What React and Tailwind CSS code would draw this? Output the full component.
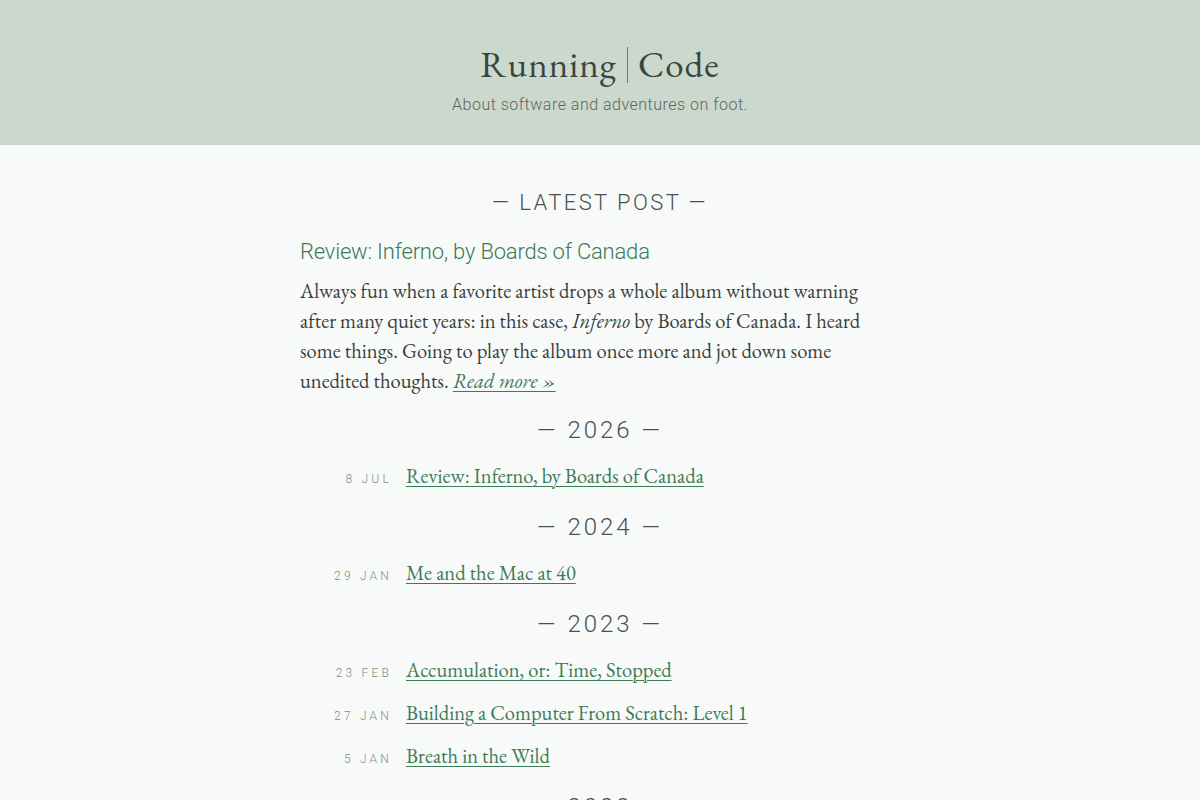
const serif = "font-['EB_Garamond','Liberation_Serif',serif]"
const sans = "font-['Roboto','Liberation_Sans',sans-serif]"

const years = [
  {
    year: '2026',
    posts: [{ date: '8 JUL', title: 'Review: Inferno, by Boards of Canada' }],
  },
  {
    year: '2024',
    posts: [{ date: '29 JAN', title: 'Me and the Mac at 40' }],
  },
  {
    year: '2023',
    posts: [
      { date: '23 FEB', title: 'Accumulation, or: Time, Stopped' },
      { date: '27 JAN', title: 'Building a Computer From Scratch: Level 1' },
      { date: '5 JAN', title: 'Breath in the Wild' },
    ],
  },
  {
    year: '2022',
    posts: [{ date: '14 NOV', title: 'Notes on a Long Run' }],
  },
]

function Heading({ children }) {
  return (
    <h2 className={`${sans} text-center text-[24px] font-light tracking-[3px] text-[#4a524c] leading-none`}>
      — {children} —
    </h2>
  )
}

export default function App() {
  return (
    <div className="min-h-screen bg-[#f7faf8]">
      <header className="h-[145px] bg-[#cbd8ce] flex flex-col items-center pt-[46px]">
        <h1 className={`${serif} text-[37px] leading-none text-[#3a463d] tracking-[1px] flex items-center`}>
          <span>Running</span>
          <span className="mx-[10px] inline-block w-px h-[36px] bg-[#6f7a72]" />
          <span>Code</span>
        </h1>
        <p className={`${sans} mt-[10px] text-[16px] font-light text-[#5d665f] tracking-[0.5px]`}>
          About software and adventures on foot.
        </p>
      </header>

      <main className="w-[600px] mx-auto pt-[47px]">
        <h2 className={`${sans} text-center text-[22px] font-light tracking-[2.4px] text-[#4a524c] leading-none`}>
          — LATEST POST —
        </h2>
        <h3 className={`${sans} mt-[27px] text-[22px] font-light tracking-[-0.2px] text-[#3d7a58] leading-none`}>
          Review: Inferno, by Boards of Canada
        </h3>
        <p className={`${serif} mt-[13px] w-[580px] text-[20.5px] leading-[30px] text-[#3b3f3c]`}>
          Always fun when a favorite artist drops a whole album without warning after many quiet years: in this case, <em>Inferno</em> by Boards of Canada. I heard some things. Going to play the album once more and jot down some unedited thoughts.{' '}
          <a href="#" className="italic text-[#3d7a58] underline underline-offset-[3px] decoration-1">Read more »</a>
        </p>

        <div className="mt-[22px] flex flex-col gap-[26px]">
          {years.map((y) => (
            <section key={y.year}>
              <Heading>{y.year}</Heading>
              <ul className="mt-[21px] flex flex-col gap-[17px]">
                {y.posts.map((p) => (
                  <li key={p.title} className="flex items-baseline">
                    <span className={`${sans} w-[92px] text-right text-[12px] font-light tracking-[3.2px] text-[#858c87]`}>
                      {p.date}
                    </span>
                    <a href="#" className={`${serif} ml-[14px] text-[20.5px] leading-[26px] text-[#3d7a58] underline underline-offset-[3px] decoration-1`}>
                      {p.title}
                    </a>
                  </li>
                ))}
              </ul>
            </section>
          ))}
        </div>
      </main>
    </div>
  )
}
